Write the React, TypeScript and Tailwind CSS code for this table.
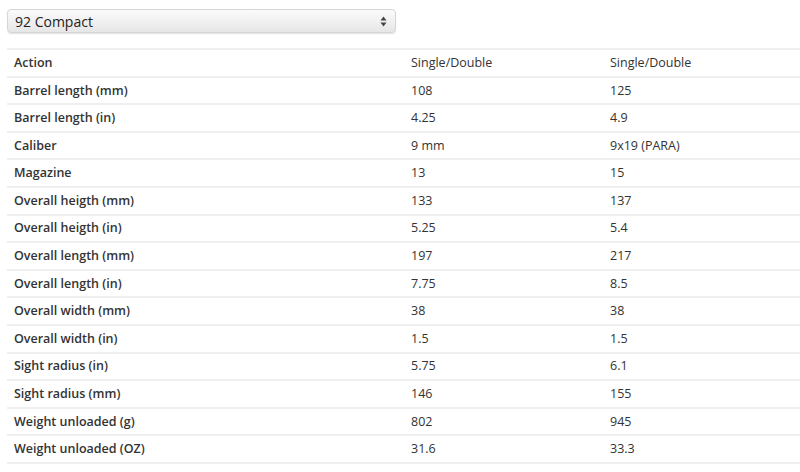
const rows: [string, string, string][] = [
  ["Action", "Single/Double", "Single/Double"],
  ["Barrel length (mm)", "108", "125"],
  ["Barrel length (in)", "4.25", "4.9"],
  ["Caliber", "9 mm", "9x19 (PARA)"],
  ["Magazine", "13", "15"],
  ["Overall heigth (mm)", "133", "137"],
  ["Overall heigth (in)", "5.25", "5.4"],
  ["Overall length (mm)", "197", "217"],
  ["Overall length (in)", "7.75", "8.5"],
  ["Overall width (mm)", "38", "38"],
  ["Overall width (in)", "1.5", "1.5"],
  ["Sight radius (in)", "5.75", "6.1"],
  ["Sight radius (mm)", "146", "155"],
  ["Weight unloaded (g)", "802", "945"],
  ["Weight unloaded (OZ)", "31.6", "33.3"],
];

export default function App() {
  return (
    <div className="w-[800px] h-[472px] bg-white overflow-hidden font-['Open_Sans',sans-serif] text-[#333]">
      <div className="pt-[9px] pl-[7px]">
        <div className="w-[389px] h-[24px] rounded-[4px] border border-[#d6d6d6] bg-gradient-to-b from-[#fbfbfb] to-[#e6e6e6] shadow-[0_1px_1px_rgba(0,0,0,0.12)] flex items-center justify-between pl-[7px] pr-[8px]">
          <span className="text-[14px] text-[#222]">92 Compact</span>
          <svg width="7" height="11" viewBox="0 0 7 11">
            <path d="M3.5 0.5 L6.5 4.5 H0.5 Z" fill="#444" />
            <path d="M3.5 10.5 L6.5 6.5 H0.5 Z" fill="#444" />
          </svg>
        </div>
      </div>
      <div className="mt-[15px] ml-[7px] border-t-2 border-[#efefef]">
        {rows.map(([label, a, b]) => (
          <div
            key={label}
            className="h-[27.6px] border-b-2 border-[#efefef] flex items-center pt-[1px]"
          >
            <div className="w-[404px] pl-[7px] text-[12.5px] font-semibold text-[#333]">
              {label}
            </div>
            <div className="w-[199px] text-[12.5px] text-[#333]">{a}</div>
            <div className="text-[12.5px] text-[#333]">{b}</div>
          </div>
        ))}
      </div>
    </div>
  );
}
